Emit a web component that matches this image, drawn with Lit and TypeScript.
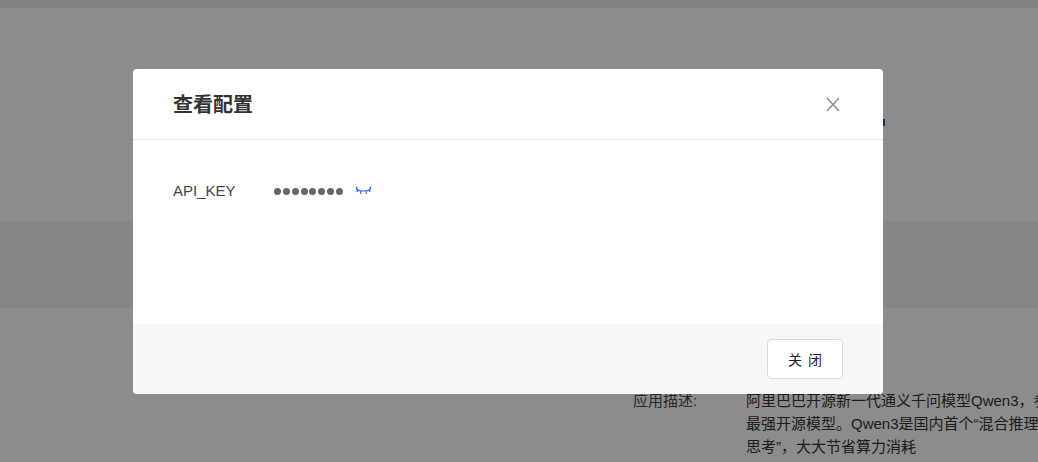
import { LitElement, html, css } from "lit";
import { customElement } from "lit/decorators.js";

@customElement("app-root")
export class AppRoot extends LitElement {
  static styles = css`
    :host {
      display: block;
      position: relative;
      width: 1038px;
      height: 462px;
      overflow: hidden;
      background: #fff;
      font-family: "Liberation Sans", "Noto Sans CJK SC", sans-serif;
      color: #333;
    }

    .top-bar {
      height: 8px;
      background: #ebeef0;
    }

    .hero {
      height: 213px;
      padding: 111px 153px 0 0;
      box-sizing: border-box;
      display: flex;
      justify-content: flex-end;
    }

    /* the only part of the page's header text that shows past the modal */
    .hero-edge {
      width: 2px;
      height: 7px;
      background: #1a5c9a;
    }

    .band {
      height: 87px;
      background: #f2f5f7;
    }

    .info {
      display: flex;
      padding: 81px 0 0 633px;
      font-size: 15px;
      line-height: 23px;
      white-space: nowrap;
    }

    .info-label {
      width: 113px;
      flex: none;
      color: #4a4a4a;
    }

    .overlay {
      position: absolute;
      inset: 0;
      background: rgba(0, 0, 0, 0.45);
    }

    .modal {
      position: absolute;
      left: 133px;
      top: 69px;
      width: 750px;
      height: 325px;
      background: #fff;
      border-radius: 4px;
      overflow: hidden;
      display: flex;
      flex-direction: column;
    }

    .modal-header {
      height: 71px;
      box-sizing: border-box;
      flex: none;
      padding: 0 43px 0 40px;
      display: flex;
      align-items: center;
      justify-content: space-between;
      border-bottom: 1px solid #e4e4ec;
    }

    .modal-title {
      font-size: 20px;
      font-weight: 700;
      color: #333;
      margin-bottom: 2px;
    }

    .close {
      width: 14px;
      height: 15px;
      display: block;
    }

    .modal-body {
      flex: 1;
      padding: 41px 40px 0;
    }

    .row {
      display: flex;
      align-items: center;
      height: 20px;
      font-size: 15px;
      color: #444;
    }

    .row-label {
      width: 101px;
      flex: none;
      margin-bottom: 2px;
    }

    .dots {
      display: flex;
      gap: 1.86px;
    }

    .dots i {
      width: 7px;
      height: 7px;
      border-radius: 50%;
      background: #666;
    }

    .eye {
      width: 17px;
      height: 10px;
      margin-left: 12px;
      display: block;
    }

    .modal-footer {
      height: 70px;
      flex: none;
      background: #f5f7f9;
      padding: 15px 40px 0 0;
      box-sizing: border-box;
      display: flex;
      justify-content: flex-end;
      align-items: flex-start;
    }

    .btn {
      width: 76px;
      height: 40px;
      box-sizing: border-box;
      background: #fff;
      border: 1px solid #dcdcdc;
      border-radius: 4px;
      font: inherit;
      font-size: 14px;
      letter-spacing: 6px;
      text-indent: 6px;
      color: #222;
      padding: 0;
    }
  `;

  render() {
    return html`
      <div class="top-bar"></div>
      <div class="hero"><div class="hero-edge"></div></div>
      <div class="band"></div>
      <div class="info">
        <div class="info-label">应用描述:</div>
        <div>
          <div>阿里巴巴开源新一代通义千问模型Qwen3，参</div>
          <div>最强开源模型。Qwen3是国内首个“混合推理</div>
          <div>思考”，大大节省算力消耗</div>
        </div>
      </div>
      <div class="overlay"></div>
      <div class="modal">
        <div class="modal-header">
          <span class="modal-title">查看配置</span>
          <svg class="close" viewBox="0 0 14 15" fill="none" stroke="#8c8c8c" stroke-width="1.4">
            <path d="M1 1l12 13M13 1L1 14" />
          </svg>
        </div>
        <div class="modal-body">
          <div class="row">
            <span class="row-label">API_KEY</span>
            <span class="dots">
              ${Array.from({ length: 8 }, () => html`<i></i>`)}
            </span>
            <svg class="eye" viewBox="0 0 17 10" fill="none" stroke="#3b6ff0" stroke-width="1.2">
              <path d="M1 2.5c1.5 1.8 3 2.5 7.5 2.5s6-.7 7.5-2.5M1 1l1.5 1.5M16 1l-1.5 1.5M1.5 6l2-2M15.5 6l-2-2M6 5l-.5 3M11 5l.5 3" />
            </svg>
          </div>
        </div>
        <div class="modal-footer">
          <button class="btn">关闭</button>
        </div>
      </div>
    `;
  }
}
